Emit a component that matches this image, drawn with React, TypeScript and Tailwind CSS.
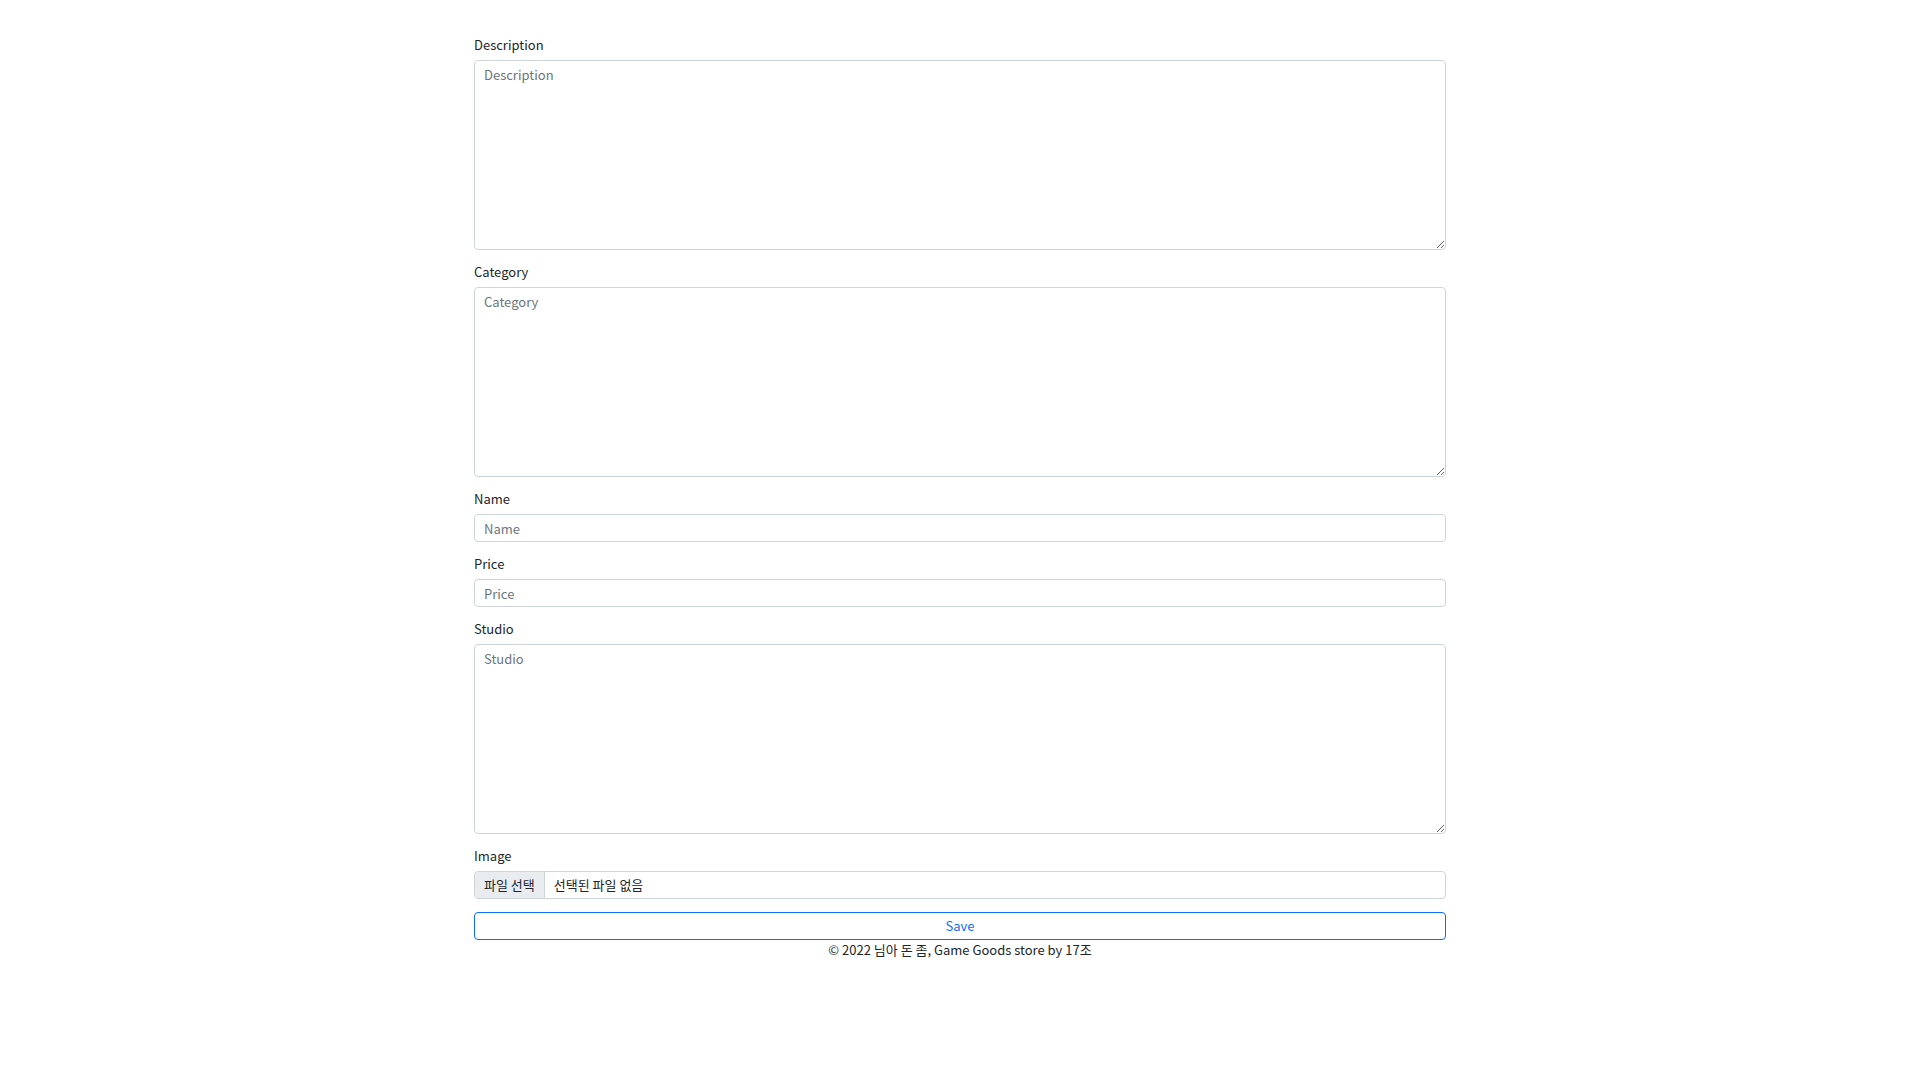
import React from "react";

const font = {
  fontFamily: '"Noto Sans CJK KR", "Noto Sans", sans-serif',
};

interface FieldProps {
  label: string;
  multiline?: boolean;
  first?: boolean;
}

const Field = ({ label, multiline, first }: FieldProps) => (
  <div className={first ? "" : "mt-[12px]"}>
    <label className="block text-[13px] leading-[19px] mb-[6px] text-[#212529]">
      {label}
    </label>
    {multiline ? (
      <textarea
        placeholder={label}
        className="block w-full h-[190px] rounded-[4px] border border-[#ced4da] bg-white px-[9px] py-[4px] text-[13px] leading-[19.5px] text-[#212529] placeholder:text-[#6c757d] outline-none"
        style={font}
      />
    ) : (
      <input
        type="text"
        placeholder={label}
        className="block w-full h-[28px] rounded-[4px] border border-[#ced4da] bg-white px-[9px] text-[13px] leading-[19.5px] text-[#212529] placeholder:text-[#6c757d] outline-none"
        style={font}
      />
    )}
  </div>
);

export default function App() {
  return (
    <div className="min-h-screen w-full bg-white text-[#212529]" style={font}>
      <div className="mx-auto w-[972px] pt-[35px]">
        <Field label="Description" multiline first />
        <Field label="Category" multiline />
        <Field label="Name" />
        <Field label="Price" />
        <Field label="Studio" multiline />

        <div className="mt-[12px]">
          <label className="block text-[13px] leading-[19px] mb-[6px] text-[#212529]">
            Image
          </label>
          <div className="flex h-[28px] w-full overflow-hidden rounded-[4px] border border-[#ced4da] bg-white text-[13px]">
            <div className="flex items-center bg-[#e9ecef] px-[9px] border-r border-[#ced4da] text-[#212529]">
              파일 선택
            </div>
            <div className="flex items-center px-[9px] text-[#212529]">
              선택된 파일 없음
            </div>
          </div>
        </div>

        <button
          type="button"
          className="mt-[13px] block h-[28px] w-full rounded-[4px] border border-[#0d6efd] bg-white text-[13px] text-[#0d6efd]"
          style={font}
        >
          Save
        </button>

        <p className="text-center text-[13px] leading-[19px] text-[#212529]">
          © 2022 님아 돈 좀, Game Goods store by 17조
        </p>
      </div>
    </div>
  );
}
